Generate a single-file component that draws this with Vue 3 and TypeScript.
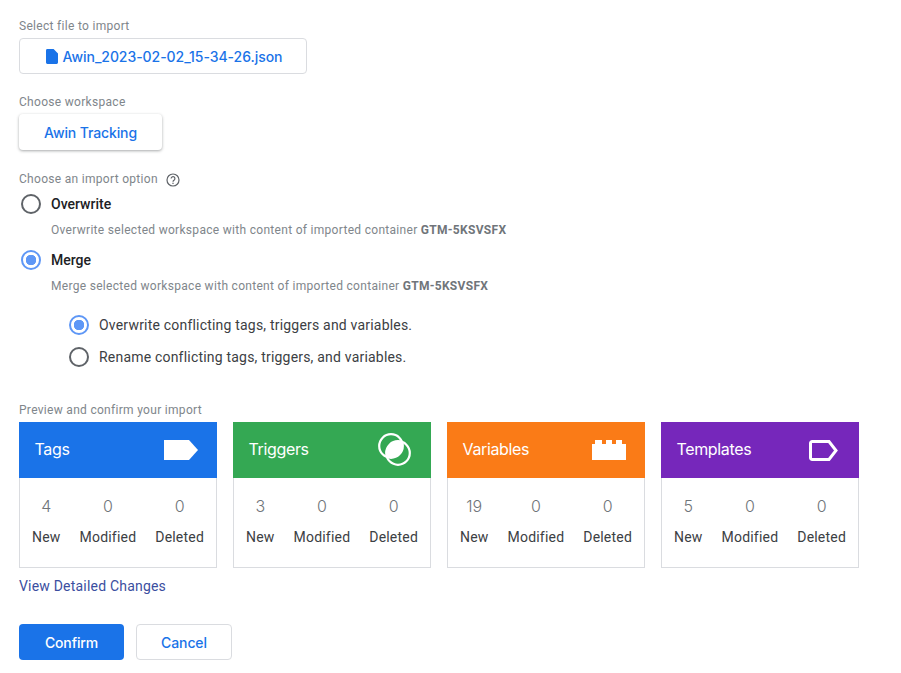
<template>
  <div class="page">
    <div class="label first">Select file to import</div>
    <button class="file-btn">
      <svg width="12" height="15" viewBox="0 0 12 15"><path d="M1.4 0H7.6L12 4.4V13.6A1.4 1.4 0 0 1 10.6 15H1.4A1.4 1.4 0 0 1 0 13.6V1.4A1.4 1.4 0 0 1 1.4 0Z" fill="#1a73e8"/></svg>
      <span>Awin_2023-02-02_15-34-26.json</span>
    </button>

    <div class="label workspace-label">Choose workspace</div>
    <button class="workspace-btn">Awin Tracking</button>

    <div class="label option-label">
      Choose an import option
      <svg class="help" width="14" height="14" viewBox="0 0 14 14">
        <circle cx="7" cy="7" r="6" fill="none" stroke="#5f6368" stroke-width="1.2"/>
        <path d="M5.1 5.5a1.9 1.9 0 1 1 3.1 1.5c-.7.5-1.2.9-1.2 1.8" fill="none" stroke="#5f6368" stroke-width="1.2"/>
        <rect x="6.4" y="9.7" width="1.2" height="1.3" fill="#5f6368"/>
      </svg>
    </div>

    <div v-for="opt in options" :key="opt.name" class="option">
      <div class="option-head">
        <span class="radio" :class="{ on: opt.checked }"></span>
        <span class="option-name">{{ opt.name }}</span>
      </div>
      <div class="option-desc">{{ opt.desc }} <b>GTM-5KSVSFX</b></div>
    </div>

    <div class="sub-options">
      <div v-for="sub in subOptions" :key="sub.text" class="sub-option">
        <span class="radio" :class="{ on: sub.checked }"></span>
        <span>{{ sub.text }}</span>
      </div>
    </div>

    <div class="label preview-label">Preview and confirm your import</div>
    <div class="cards">
      <div v-for="card in cards" :key="card.title" class="card">
        <div class="card-head" :class="card.cls">
          <span class="card-title">{{ card.title }}</span>
          <svg v-if="card.cls === 'tags'" width="34" height="20" viewBox="0 0 34 20"><path d="M0 0H25L34 10L25 20H0Z" fill="#fff"/></svg>
          <svg v-else-if="card.cls === 'triggers'" class="trigger-icon" width="33" height="33" viewBox="0 0 33 33">
            <circle cx="13" cy="13" r="11.8" fill="none" stroke="#fff" stroke-width="2.2"/>
            <circle cx="20" cy="20" r="11.8" fill="none" stroke="#fff" stroke-width="2.2"/>
            <path d="M24.07 8.93A11.8 11.8 0 0 1 8.93 24.07A11.8 11.8 0 0 1 24.07 8.93Z" fill="#fff"/>
          </svg>
          <svg v-else-if="card.cls === 'variables'" width="34" height="20" viewBox="0 0 34 20"><path d="M0 4H3V0H10V4H14V0H20V4H24V0H30V4H34V20H0Z" fill="#fff"/></svg>
          <svg v-else width="29" height="21" viewBox="0 0 29 21"><path d="M3.2 1.5H20L27 10.5L20 19.5H3.2A1.7 1.7 0 0 1 1.5 17.8V3.2A1.7 1.7 0 0 1 3.2 1.5Z" fill="none" stroke="#fff" stroke-width="3"/></svg>
        </div>
        <div class="card-body">
          <div v-for="stat in card.stats" :key="stat.label" class="stat">
            <div class="stat-num">{{ stat.num }}</div>
            <div class="stat-label">{{ stat.label }}</div>
          </div>
        </div>
      </div>
    </div>

    <a class="details">View Detailed Changes</a>

    <div class="actions">
      <button class="confirm">Confirm</button>
      <button class="cancel">Cancel</button>
    </div>
  </div>
</template>

<script setup lang="ts">
const options = [
  { name: 'Overwrite', desc: 'Overwrite selected workspace with content of imported container', checked: false },
  { name: 'Merge', desc: 'Merge selected workspace with content of imported container', checked: true },
]

const subOptions = [
  { text: 'Overwrite conflicting tags, triggers and variables.', checked: true },
  { text: 'Rename conflicting tags, triggers, and variables.', checked: false },
]

const makeStats = (n: number) => [
  { label: 'New', num: n },
  { label: 'Modified', num: 0 },
  { label: 'Deleted', num: 0 },
]

const cards = [
  { title: 'Tags', cls: 'tags', stats: makeStats(4) },
  { title: 'Triggers', cls: 'triggers', stats: makeStats(3) },
  { title: 'Variables', cls: 'variables', stats: makeStats(19) },
  { title: 'Templates', cls: 'templates', stats: makeStats(5) },
]
</script>

<style>
html, body {
  background: #fff;
}
</style>

<style scoped>
.page {
  box-sizing: border-box;
  height: 673px;
  overflow: hidden;
  padding: 0 0 0 19px;
  font-family: Roboto, "Liberation Sans", sans-serif;
  color: #202124;
}
button {
  font-family: Inter, Roboto, sans-serif;
  font-weight: 500;
  font-size: 14px;
  letter-spacing: -0.12px;
  cursor: pointer;
  box-sizing: border-box;
}
.label {
  font-size: 12px;
  line-height: 16px;
  color: #80868b;
  letter-spacing: 0.3px;
}
.first { padding-top: 18px; }
.file-btn {
  display: flex;
  align-items: center;
  justify-content: center;
  gap: 5px;
  width: 288px;
  height: 36px;
  margin-top: 4px;
  padding: 0 0 0 2px;
  background: #fff;
  border: 1px solid #dadce0;
  border-radius: 4px;
  letter-spacing: -0.05px;
  color: #1a73e8;
}
.workspace-label { margin-top: 20px; }
.workspace-btn {
  display: block;
  width: 143px;
  height: 36px;
  margin-top: 4px;
  background: #fff;
  border: none;
  border-radius: 4px;
  color: #1a73e8;
  box-shadow: 0 1px 3px rgba(60, 64, 67, 0.45);
}
.option-label {
  display: flex;
  align-items: center;
  gap: 8px;
  margin-top: 21px;
}
.help { margin-top: 1px; }
.option { margin-top: 0; }
.option-head {
  display: flex;
  align-items: center;
  gap: 10px;
  height: 26px;
  margin-top: 4px;
  padding-left: 2px;
}
.option-name {
  font-size: 14px;
  font-weight: 500;
  color: #202124;
}
.option-desc {
  margin-top: 4px;
  margin-bottom: 0;
  padding-left: 32px;
  font-size: 12px;
  line-height: 18px;
  color: #80868b;
  letter-spacing: 0.3px;
}
.option-desc b {
  font-weight: 700;
  color: #70757a;
  letter-spacing: 0.3px;
}
.option + .option { margin-top: 8px; }
.radio {
  box-sizing: border-box;
  flex: none;
  display: inline-block;
  width: 20px;
  height: 20px;
  border: 2px solid #5f6368;
  border-radius: 50%;
  background: #fff;
}
.radio.on {
  border-color: #5e97f6;
  background: radial-gradient(circle, #5e97f6 0 5px, #fff 5.5px);
}
.sub-options {
  margin-top: 14px;
  padding-left: 50px;
}
.sub-option {
  display: flex;
  align-items: center;
  gap: 10px;
  height: 32px;
  font-size: 14px;
  color: #3c4043;
  letter-spacing: 0.2px;
}
.preview-label { margin-top: 29px; }
.cards {
  display: flex;
  gap: 16px;
  margin-top: 4px;
}
.card { width: 198px; }
.card-head {
  box-sizing: border-box;
  height: 56px;
  padding: 0 19px 0 15.5px;
  display: flex;
  align-items: center;
  justify-content: space-between;
  font-family: Inter, Roboto, sans-serif;
  font-size: 16px;
  letter-spacing: -0.35px;
  color: #fff;
}
.card-title { margin-top: -2px; }
.tags { background: #1a73e8; }
.triggers { background: #34a853; padding-right: 20px; }
.trigger-icon { margin-top: -2px; }
.variables { background: #fa7b17; }
.templates { background: #7627bb; padding-right: 21px; }
.card-body {
  box-sizing: border-box;
  height: 90px;
  padding: 18px 12px 0;
  display: flex;
  justify-content: space-between;
  border: 1px solid #dadce0;
  border-top: none;
}
.stat { text-align: center; }
.stat-num {
  font-family: Inter, Roboto, sans-serif;
  font-size: 16px;
  font-weight: 300;
  line-height: 20px;
  color: #70757a;
}
.stat-label {
  margin-top: 11px;
  font-size: 14px;
  line-height: 20px;
  letter-spacing: 0.2px;
  color: #3c4043;
}
.details {
  display: block;
  margin-top: 8px;
  font-size: 14px;
  line-height: 20px;
  letter-spacing: 0.2px;
  color: #3b4ea0;
}
.actions {
  display: flex;
  gap: 12px;
  margin-top: 28px;
}
.confirm {
  width: 105px;
  height: 36px;
  background: #1a73e8;
  border: none;
  border-radius: 4px;
  color: #fff;
}
.cancel {
  width: 96px;
  height: 36px;
  background: #fff;
  border: 1px solid #dadce0;
  border-radius: 4px;
  color: #1a73e8;
}
</style>
